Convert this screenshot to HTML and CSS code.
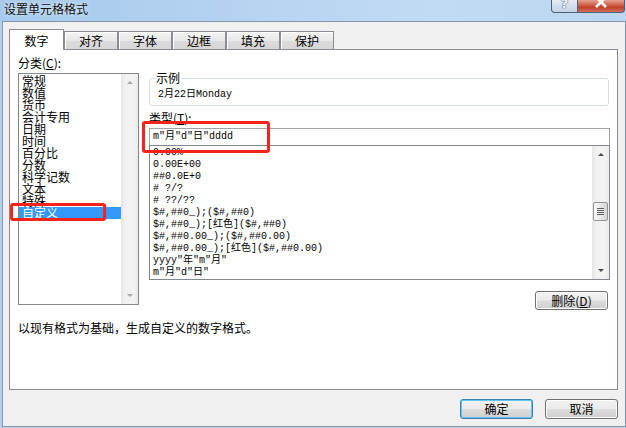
FILE: index.html
```html
<!DOCTYPE html>
<html lang="zh-CN">
<head>
  <meta charset="UTF-8">
  <title>设置单元格格式</title>
  <link rel="stylesheet" href="styles.css">
</head>
<body>
  <div class="window">
    <!-- Title bar -->
    <div class="titlebar">
      <span class="title">设置单元格格式</span>
      <div class="caption-btns">
        <span class="cap-help">?</span>
        <span class="cap-close">
          <svg width="12" height="9" viewBox="0 0 12 9"><path d="M1 -3 L11 7 M11 -3 L1 7" stroke="#fff" stroke-width="2.6" fill="none"/></svg>
        </span>
      </div>
    </div>

    <div class="client">
      <!-- Tabs -->
      <div class="tabs">
        <div class="tab active">数字</div>
        <div class="tab">对齐</div>
        <div class="tab">字体</div>
        <div class="tab">边框</div>
        <div class="tab">填充</div>
        <div class="tab">保护</div>
      </div>

      <div class="panel">
        <div class="panel-main">
          <div class="col-left">
            <div class="label">分类(<u>C</u>):</div>
            <div class="listbox cat-list">
              <ul class="items">
                <li>常规</li>
                <li>数值</li>
                <li>货币</li>
                <li>会计专用</li>
                <li>日期</li>
                <li>时间</li>
                <li>百分比</li>
                <li>分数</li>
                <li>科学记数</li>
                <li>文本</li>
                <li>特殊</li>
                <li class="selected">自定义</li>
              </ul>
              <div class="vscroll disabled">
                <div class="sb-btn up"></div>
                <div class="sb-track"></div>
                <div class="sb-btn down"></div>
              </div>
            </div>
          </div>

          <div class="col-right">
            <fieldset class="sample">
              <legend>示例</legend>
              <div class="sample-text">2月22日Monday</div>
            </fieldset>
            <div class="label type-label">类型(<u>T</u>):</div>
            <div class="type-input">m"月"d"日"dddd</div>
            <div class="listbox fmt-list">
              <ul class="items mono">
                <li>0.00%</li>
                <li>0.00E+00</li>
                <li>##0.0E+0</li>
                <li># ?/?</li>
                <li># ??/??</li>
                <li>$#,##0_);($#,##0)</li>
                <li>$#,##0_);[红色]($#,##0)</li>
                <li>$#,##0.00_);($#,##0.00)</li>
                <li>$#,##0.00_);[红色]($#,##0.00)</li>
                <li>yyyy"年"m"月"</li>
                <li>m"月"d"日"</li>
              </ul>
              <div class="vscroll">
                <div class="sb-btn up"></div>
                <div class="sb-track">
                  <div class="sb-thumb"><span class="grip"></span></div>
                </div>
                <div class="sb-btn down"></div>
              </div>
            </div>
            <div class="btn-row">
              <button class="btn">删除(<u>D</u>)</button>
            </div>
          </div>
        </div>
        <p class="desc">以现有格式为基础，生成自定义的数字格式。</p>
      </div>

      <div class="footer">
        <button class="btn default">确定</button>
        <button class="btn">取消</button>
      </div>
    </div>

    <!-- red annotation boxes -->
    <div class="mark mark-type"></div>
    <div class="mark mark-cat"></div>
  </div>
</body>
</html>
```

FILE: styles.css
```css
html, body {
  margin: 0;
  padding: 0;
  font-family: "Noto Sans CJK SC", "Liberation Sans", sans-serif;
  font-size: 12px;
  color: #000;
}

.window {
  position: relative;
  width: 626px;
  height: 428px;
  box-sizing: border-box;
  padding-bottom: 1px;
  background: #b3cfec;
  display: flex;
  flex-direction: column;
  overflow: hidden;
}

/* Title bar */
.titlebar {
  height: 21px;
  flex: none;
  display: flex;
  padding-right: 1px;
  background: linear-gradient(to right, #a7c9ec 0%, #b4d2f0 35%, #c2dbf4 70%, #bcd6f1 100%);
}

.title {
  padding: 2px 0 0 4px;
  line-height: 13px;
  font-size: 12px;
  color: #111;
  text-shadow: 0 0 5px rgba(255, 255, 255, 0.9);
}

.caption-btns {
  margin-left: auto;
  display: flex;
  height: 13px;
}

.cap-help, .cap-close {
  box-sizing: border-box;
  height: 13px;
  border: 1px solid #4f6178;
  border-top: 0;
  display: flex;
  justify-content: center;
  overflow: hidden;
}

.cap-help {
  width: 27px;
  border-radius: 0 0 0 4px;
  background: linear-gradient(#e3ebf4, #c3d2e2);
  color: #f6f8fb;
  font: bold 13px/8px "DejaVu Sans", sans-serif;
  text-shadow: 0 0 1px #36465a, 0 0 1px #36465a;
}

.cap-close {
  width: 47px;
  border-left: 0;
  border-radius: 0 0 4px 0;
  background: linear-gradient(#e5a391, #cf5a45 45%, #c0402b 60%, #d0715c);
}

/* Client area */
.client {
  flex: 1;
  margin-left: 2px;
  background: #f0f0f0;
  border: 1px solid #8496ad;
  padding: 7px 7px 0 6px;
  display: flex;
  flex-direction: column;
}

.tabs {
  display: flex;
  align-items: flex-end;
  height: 20px;
}

.tab {
  box-sizing: border-box;
  width: 54px;
  height: 18px;
  border: 1px solid #898c95;
  border-bottom: 0;
  background: linear-gradient(#f4f4f4, #e8e8e8 50%, #dcdcdc 51%, #d6d6d6);
  box-shadow: inset 1px 1px 0 #fff;
  text-align: center;
  line-height: 17px;
}

.tab.active {
  position: relative;
  z-index: 1;
  width: 55px;
  height: 21px;
  margin-bottom: -1px;
  background: #fff;
  box-shadow: none;
  padding-top: 2px;
  line-height: 17px;
}

.panel {
  box-sizing: border-box;
  height: 341px;
  border: 1px solid #898c95;
  background: #fff;
  padding: 7px 7px 0 8px;
}

.panel-main {
  display: grid;
  grid-template-columns: 121px 1fr;
  column-gap: 10px;
  align-items: start;
}

.label {
  line-height: 12px;
  height: 12px;
  margin-bottom: 4px;
  white-space: nowrap;
}

/* List boxes */
.listbox {
  box-sizing: border-box;
  border: 1px solid #828790;
  background: #fff;
  display: flex;
  overflow: hidden;
}

.items {
  flex: 1;
  margin: 0;
  padding: 1px 0 0;
  list-style: none;
  overflow: hidden;
}

.items li {
  line-height: 12px;
  height: 12px;
  padding-left: 3px;
  white-space: nowrap;
}

.cat-list {
  height: 232px;
}

.cat-list .items li.selected {
  background: #3399ff;
  color: #fff;
}

.mono {
  font-family: "Liberation Mono", "Noto Sans CJK SC", monospace;
  font-size: 10px;
}

/* Scrollbars */
.vscroll {
  width: 17px;
  flex: none;
  display: flex;
  flex-direction: column;
  background: linear-gradient(to right, #e6e6e6, #f1f1f1 25%, #f3f3f3 75%, #e9e9e9);
}

.sb-btn {
  height: 17px;
  display: flex;
  align-items: center;
  justify-content: center;
}

.sb-btn::before {
  content: '';
  border-left: 3px solid transparent;
  border-right: 3px solid transparent;
}

.sb-btn.up::before { border-bottom: 3px solid #4a4a4a; }
.sb-btn.down::before { border-top: 3px solid #4a4a4a; }
.vscroll.disabled .sb-btn.up::before { border-bottom-color: #a8a8a8; }
.vscroll.disabled .sb-btn.down::before { border-top-color: #a8a8a8; }

.sb-track {
  flex: 1;
}

.sb-thumb {
  box-sizing: border-box;
  margin: 39px 1px 0;
  height: 19px;
  border: 1px solid #959595;
  border-radius: 2px;
  background: linear-gradient(to right, #f7f7f7, #e8e8e8 50%, #d6d6d6);
  display: flex;
  align-items: center;
  justify-content: center;
}

.grip {
  width: 7px;
  height: 8px;
  background: repeating-linear-gradient(#5f5f5f 0 1px, #e9e9e9 1px 2px);
}

/* Right column */
.col-right {
  padding-top: 15px;
}

.sample {
  margin: 0 1px 0 0;
  padding: 0 0 0 5px;
  border: 1px solid #d5dfe5;
  border-radius: 3px;
}

.sample legend {
  padding: 0 1px;
  line-height: 12px;
}

.sample-text {
  padding: 5px 0 4px 3px;
  line-height: 12px;
  font-family: "Liberation Mono", "Noto Sans CJK SC", monospace;
  font-size: 10px;
}

.type-label {
  margin-top: 6px;
}

.type-input {
  box-sizing: border-box;
  height: 18px;
  border: 1px solid #a0a3aa;
  padding-left: 3px;
  line-height: 16px;
  font-family: "Liberation Mono", "Noto Sans CJK SC", monospace;
  font-size: 10px;
}

.fmt-list {
  margin-top: -1px;
  height: 135px;
}

.btn-row {
  display: flex;
  justify-content: flex-end;
  margin: 11px 2px 0 0;
}

/* Buttons */
.btn {
  box-sizing: border-box;
  width: 73px;
  height: 19px;
  padding: 0;
  border: 1px solid #707070;
  border-radius: 3px;
  background: linear-gradient(#f2f2f2, #ebebeb 48%, #dddddd 52%, #cfcfcf);
  box-shadow: inset 0 0 0 1px #fcfcfc;
  font-family: "Noto Sans CJK SC", sans-serif;
  font-size: 12px;
  line-height: 16px;
  color: #000;
}

.btn u {
  text-underline-offset: 1px;
}

.desc {
  margin: 12px 0 0;
  line-height: 12px;
}

.footer {
  display: flex;
  justify-content: flex-end;
  gap: 12px;
  margin-top: 9px;
}

.footer .btn {
  height: 20px;
}

.btn.default {
  border-color: #3c7fb1;
  box-shadow: inset 0 0 0 1px #61c6f2;
}

/* annotation */
.mark {
  position: absolute;
  box-sizing: border-box;
  border: 3px solid #f4241d;
  border-radius: 3px;
}

.mark-type {
  left: 142px;
  top: 121px;
  width: 128px;
  height: 32px;
}

.mark-cat {
  left: 10px;
  top: 203px;
  width: 96px;
  height: 18px;
}
```
